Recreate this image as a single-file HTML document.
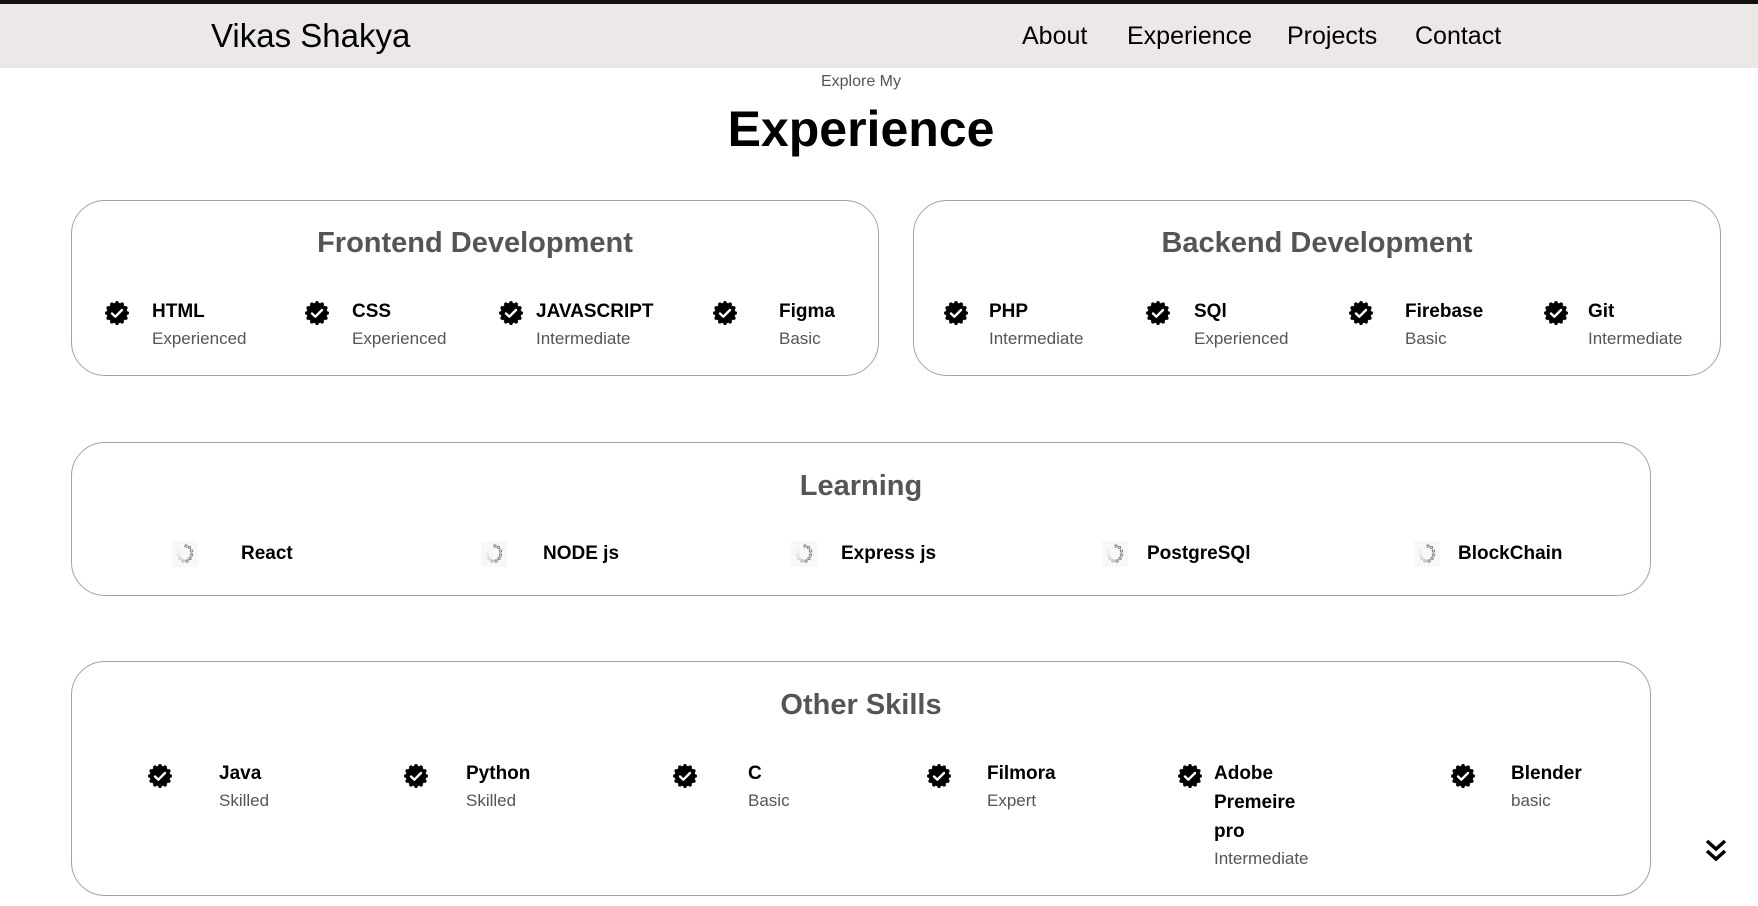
<!DOCTYPE html>
<html><head><meta charset="utf-8"><style>
*{margin:0;padding:0;box-sizing:border-box}
body{width:1758px;height:906px;overflow:hidden;background:#fff;font-family:"Liberation Sans",sans-serif;position:relative;color:#000}
.a{position:absolute;white-space:nowrap}
.nav{position:absolute;left:0;top:0;width:1758px;height:68px;background:#ede8e8;border-top:4px solid #111}
.card{position:absolute;border:1px solid #a3a3a3;border-radius:34px}
.t{position:absolute;font-size:29px;font-weight:bold;color:#555;line-height:34px;transform:translateX(-50%)}
.n{font-size:19px;font-weight:bold;line-height:24px}
.s{font-size:17px;color:#555;line-height:22px}
.ic{position:absolute;width:24px;height:24px}
.sp{position:absolute;width:26px;height:26px}
</style></head><body>
<div class="nav"></div>
<div class="a" style="left:211px;top:16px;font-size:33px;line-height:40px">Vikas Shakya</div>
<div class="a" style="left:1022px;top:21px;font-size:25px;line-height:30px">About</div>
<div class="a" style="left:1127px;top:21px;font-size:25px;line-height:30px">Experience</div>
<div class="a" style="left:1287px;top:21px;font-size:25px;line-height:30px">Projects</div>
<div class="a" style="left:1415px;top:21px;font-size:25px;line-height:30px">Contact</div>
<div class="a" style="left:861px;top:73px;font-size:16px;line-height:18px;color:#555;transform:translateX(-50%)">Explore My</div>
<div class="a" style="left:861px;top:99px;font-size:50px;font-weight:bold;line-height:60px;transform:translateX(-50%)">Experience</div>

<div class="card" style="left:71px;top:200px;width:808px;height:176px"></div>
<div class="card" style="left:913px;top:200px;width:808px;height:176px"></div>
<div class="card" style="left:71px;top:442px;width:1580px;height:154px"></div>
<div class="card" style="left:71px;top:661px;width:1580px;height:235px"></div>

<div class="t a" style="left:475px;top:226px">Frontend Development</div>
<div class="t a" style="left:1317px;top:226px">Backend Development</div>
<div class="t a" style="left:861px;top:469px">Learning</div>
<div class="t a" style="left:861px;top:688px">Other Skills</div>

<svg width="0" height="0" style="position:absolute"><defs>
<symbol id="ck" viewBox="0 0 24 24"><g fill="#000"><circle cx="12" cy="12" r="10.3"/>
<circle cx="12" cy="1.8" r="1.8"/><circle cx="17.1" cy="3.2" r="1.8"/><circle cx="20.8" cy="6.9" r="1.8"/><circle cx="22.2" cy="12" r="1.8"/><circle cx="20.8" cy="17.1" r="1.8"/><circle cx="17.1" cy="20.8" r="1.8"/><circle cx="12" cy="22.2" r="1.8"/><circle cx="6.9" cy="20.8" r="1.8"/><circle cx="3.2" cy="17.1" r="1.8"/><circle cx="1.8" cy="12" r="1.8"/><circle cx="3.2" cy="6.9" r="1.8"/><circle cx="6.9" cy="3.2" r="1.8"/></g>
<path d="M7 12.5l3.3 3.2L17 9" fill="none" stroke="#fff" stroke-width="2.4" stroke-linecap="round" stroke-linejoin="round"/></symbol>
<symbol id="sp" viewBox="0 0 26 26"><rect width="26" height="26" fill="#f8f8f8"/><g fill="none" stroke="#777" stroke-width=".9"><circle cx="14" cy="5" r="1.2"/><circle cx="17.5" cy="6.5" r="1.2"/><circle cx="19.5" cy="10" r="1.2"/><circle cx="19.5" cy="14" r="1.2"/><circle cx="18" cy="17.5" r="1.2"/><circle cx="15" cy="20" r="1.2"/><circle cx="11" cy="20" r="1.2" stroke="#aaa"/><circle cx="8" cy="17.5" r="1.2" stroke="#ccc"/><circle cx="6.5" cy="14" r="1.2" stroke="#ddd"/><circle cx="6.5" cy="10" r="1.2" stroke="#eee"/></g></symbol>
</defs></svg>

<!-- Frontend -->
<svg class="ic" style="left:105px;top:301px"><use href="#ck"/></svg>
<div class="a n" style="left:152px;top:300px">HTML</div><div class="a s" style="left:152px;top:328px">Experienced</div>
<svg class="ic" style="left:305px;top:301px"><use href="#ck"/></svg>
<div class="a n" style="left:352px;top:300px">CSS</div><div class="a s" style="left:352px;top:328px">Experienced</div>
<svg class="ic" style="left:499px;top:301px"><use href="#ck"/></svg>
<div class="a n" style="left:536px;top:300px">JAVASCRIPT</div><div class="a s" style="left:536px;top:328px">Intermediate</div>
<svg class="ic" style="left:713px;top:301px"><use href="#ck"/></svg>
<div class="a n" style="left:779px;top:300px">Figma</div><div class="a s" style="left:779px;top:328px">Basic</div>
<!-- Backend -->
<svg class="ic" style="left:944px;top:301px"><use href="#ck"/></svg>
<div class="a n" style="left:989px;top:300px">PHP</div><div class="a s" style="left:989px;top:328px">Intermediate</div>
<svg class="ic" style="left:1146px;top:301px"><use href="#ck"/></svg>
<div class="a n" style="left:1194px;top:300px">SQl</div><div class="a s" style="left:1194px;top:328px">Experienced</div>
<svg class="ic" style="left:1349px;top:301px"><use href="#ck"/></svg>
<div class="a n" style="left:1405px;top:300px">Firebase</div><div class="a s" style="left:1405px;top:328px">Basic</div>
<svg class="ic" style="left:1544px;top:301px"><use href="#ck"/></svg>
<div class="a n" style="left:1588px;top:300px">Git</div><div class="a s" style="left:1588px;top:328px">Intermediate</div>
<!-- Learning -->
<svg class="sp" style="left:172px;top:541px"><use href="#sp"/></svg><div class="a n" style="left:241px;top:542px">React</div>
<svg class="sp" style="left:481px;top:541px"><use href="#sp"/></svg><div class="a n" style="left:543px;top:542px">NODE js</div>
<svg class="sp" style="left:791px;top:541px"><use href="#sp"/></svg><div class="a n" style="left:841px;top:542px">Express js</div>
<svg class="sp" style="left:1102px;top:541px"><use href="#sp"/></svg><div class="a n" style="left:1147px;top:542px">PostgreSQl</div>
<svg class="sp" style="left:1414px;top:541px"><use href="#sp"/></svg><div class="a n" style="left:1458px;top:542px">BlockChain</div>
<!-- Other -->
<svg class="ic" style="left:148px;top:764px"><use href="#ck"/></svg>
<div class="a n" style="left:219px;top:762px">Java</div><div class="a s" style="left:219px;top:790px">Skilled</div>
<svg class="ic" style="left:404px;top:764px"><use href="#ck"/></svg>
<div class="a n" style="left:466px;top:762px">Python</div><div class="a s" style="left:466px;top:790px">Skilled</div>
<svg class="ic" style="left:673px;top:764px"><use href="#ck"/></svg>
<div class="a n" style="left:748px;top:762px">C</div><div class="a s" style="left:748px;top:790px">Basic</div>
<svg class="ic" style="left:927px;top:764px"><use href="#ck"/></svg>
<div class="a n" style="left:987px;top:762px">Filmora</div><div class="a s" style="left:987px;top:790px">Expert</div>
<svg class="ic" style="left:1178px;top:764px"><use href="#ck"/></svg>
<div class="a n" style="left:1214px;top:759px;line-height:29px;white-space:normal;width:110px">Adobe Premeire pro</div><div class="a s" style="left:1214px;top:848px">Intermediate</div>
<svg class="ic" style="left:1451px;top:764px"><use href="#ck"/></svg>
<div class="a n" style="left:1511px;top:762px">Blender</div><div class="a s" style="left:1511px;top:790px">basic</div>

<svg style="position:absolute;left:1704px;top:838px" width="24" height="26" viewBox="0 0 24 26"><path d="M3 3l9 8 9-8M3 13l9 8 9-8" fill="none" stroke="#000" stroke-width="3.5" stroke-linejoin="miter"/></svg>
</body></html>
